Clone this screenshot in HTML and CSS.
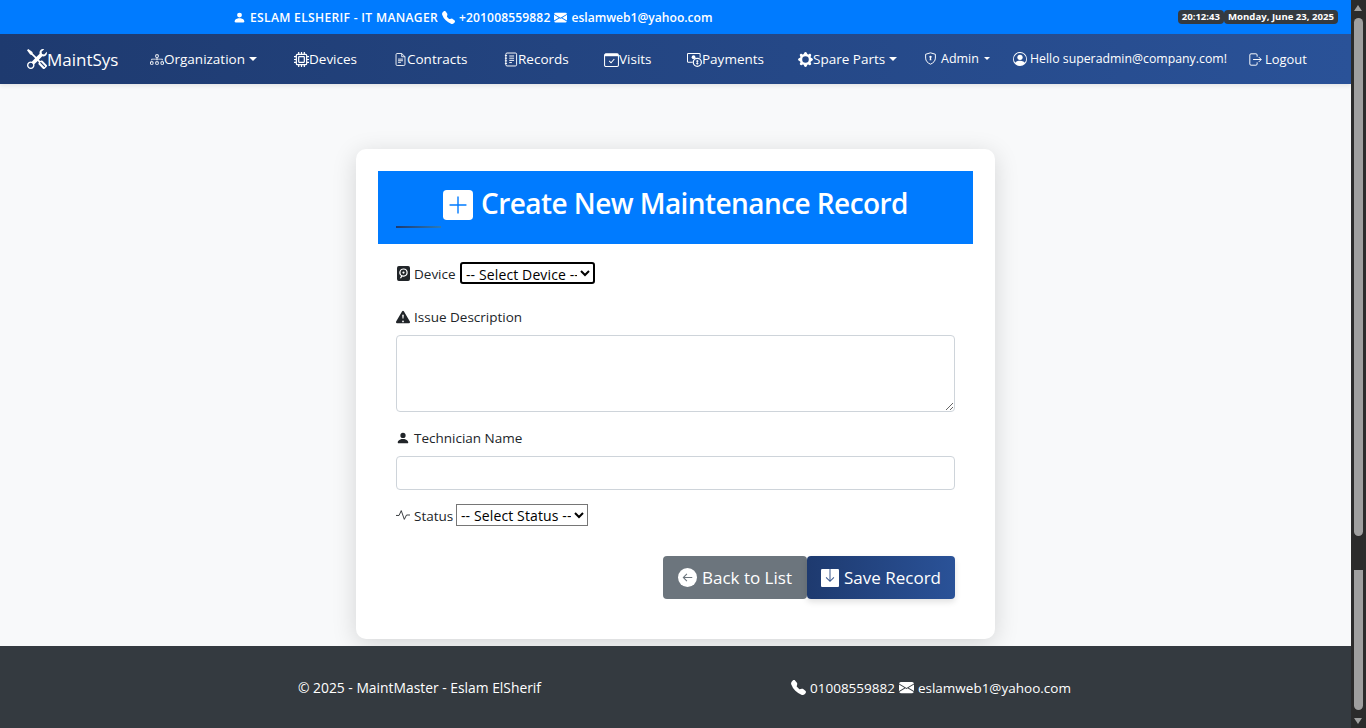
FILE: index.html
```html
<!DOCTYPE html>
<html lang="en">
<head>
<meta charset="utf-8">
<title>Create New Maintenance Record</title>
<link rel="stylesheet" href="styles.css">
</head>
<body>
<div class="app">
  <div class="page">
    <div class="topbar">
      <div class="contact">
        <svg class="ti" viewBox="0 0 16 16"><path fill="currentColor" d="M3 14s-1 0-1-1 1-4 6-4 6 3 6 4-1 1-1 1H3zm5-6a3 3 0 1 0 0-6 3 3 0 0 0 0 6z"/></svg>
        <span class="c-name">ESLAM ELSHERIF - IT MANAGER</span>
        <svg class="ti" viewBox="0 0 16 16"><path fill="currentColor" d="M1.900.5a1.700 1.700 0 0 1 2.600.2l1.800 2.300c.3.400.4 1 .3 1.500l-.5 2.200c0 .2 0 .5.200.6l2.400 2.400c.2.200.4.200.6.200l2.200-.5c.5-.1 1.100 0 1.500.3l2.300 1.800c.8.600.9 1.900.2 2.600l-1 1c-.8.800-1.900 1.100-2.900.8a18.600 18.600 0 0 1-7-4.400 18.600 18.600 0 0 1-4.400-7c-.3-1-.1-2.100.7-2.900l1-1.100z"/></svg>
        <span class="c-phone">+201008559882</span>
        <svg class="ti" viewBox="0 0 16 16"><path fill="currentColor" d="M.05 3.600A2 2 0 0 1 2 2h12a2 2 0 0 1 1.950 1.600L8 8.400.05 3.600zM0 4.700v7.100l5.800-3.600L0 4.700zm6.800 4.100L.2 12.900A2 2 0 0 0 2 14h12a2 2 0 0 0 1.800-1.100l-6.600-4.100-1.200.7-1.200-.7zm3.400-.6 5.800 3.600V4.700l-5.800 3.500z"/></svg>
        <span>eslamweb1@yahoo.com</span>
      </div>
      <div class="clock">
        <span class="chip">20:12:43</span><span class="chip">Monday, June 23, 2025</span>
      </div>
    </div>

    <nav class="navbar">
      <a class="brand">
        <svg class="brand-icon" viewBox="0 0 16 16"><path fill="currentColor" d="M1 0 0 1l2.200 3.081a1 1 0 0 0 .815.419h.07a1 1 0 0 1 .708.293l2.675 2.675-2.617 2.654A3.003 3.003 0 0 0 0 13a3 3 0 1 0 5.878-.851l2.654-2.617.968.968-.305.914a1 1 0 0 0 .242 1.023l3.270 3.270a.997.997 0 0 0 1.414 0l1.586-1.586a.997.997 0 0 0 0-1.414l-3.270-3.270a1 1 0 0 0-1.023-.242L10.500 9.500l-.96-.96 2.680-2.643A3.005 3.005 0 0 0 16 3q0-.405-.102-.777l-2.140 2.141L12 4l-.364-1.757L13.777.102a3 3 0 0 0-3.675 3.680L7.462 6.460 4.793 3.793a1 1 0 0 1-.293-.707v-.071a1 1 0 0 0-.419-.814zm9.646 10.646a.5.500 0 0 1 .708 0l2.914 2.915a.456.456 0 0 1-.645.644l-2.914-2.914a.5.500 0 0 1 0-.707zM3 11l.471.242.529.026.287.445.445.287.026.529L5 13l-.242.471-.026.529-.445.287-.287.445-.529.026L3 15l-.471-.242L2 14.732l-.287-.445L1.268 14l-.026-.529L1 13l.242-.471.026-.529.445-.287.287-.445.529-.026z"/></svg>
        <span>MaintSys</span>
      </a>
      <a class="item w-org"><svg class="ni" viewBox="0 0 16 16"><path fill="currentColor" fill-rule="evenodd" d="M6 3.500A1.500 1.500 0 0 1 7.500 2h1A1.500 1.500 0 0 1 10 3.500v1A1.500 1.500 0 0 1 8.500 6v1H14a.5.500 0 0 1 .5.500v1a.5.500 0 0 1-1 0V8h-5v.5a.5.500 0 0 1-1 0V8h-5v.5a.5.500 0 0 1-1 0v-1A.5.500 0 0 1 2 7h5.500V6A1.500 1.500 0 0 1 6 4.500zM8.500 5a.5.500 0 0 0 .5-.5v-1a.5.500 0 0 0-.5-.5h-1a.5.500 0 0 0-.5.500v1a.5.500 0 0 0 .5.500zM0 11.500A1.500 1.500 0 0 1 1.500 10h1A1.500 1.500 0 0 1 4 11.500v1A1.500 1.500 0 0 1 2.500 14h-1A1.500 1.500 0 0 1 0 12.500zm1.500-.5a.5.500 0 0 0-.5.500v1a.5.500 0 0 0 .5.500h1a.5.500 0 0 0 .5-.5v-1a.5.500 0 0 0-.5-.5zm4.500.500A1.500 1.500 0 0 1 7.500 10h1a1.500 1.500 0 0 1 1.500 1.500v1A1.500 1.500 0 0 1 8.500 14h-1A1.500 1.500 0 0 1 6 12.500zm1.500-.5a.5.500 0 0 0-.5.500v1a.5.500 0 0 0 .5.500h1a.5.500 0 0 0 .5-.5v-1a.5.500 0 0 0-.5-.5zm4.500.500a1.500 1.500 0 0 1 1.500-1.500h1a1.500 1.500 0 0 1 1.500 1.500v1a1.500 1.500 0 0 1-1.500 1.500h-1a1.500 1.500 0 0 1-1.500-1.500zm1.500-.5a.5.500 0 0 0-.5.500v1a.5.500 0 0 0 .5.500h1a.5.500 0 0 0 .5-.5v-1a.5.500 0 0 0-.5-.5z"/></svg><span>Organization</span><i class="caret"></i></a>
      <a class="item w-dev"><svg class="ni" viewBox="0 0 16 16"><path fill="none" stroke="currentColor" stroke-width="1.300" d="M3.500 2.500h9a1 1 0 0 1 1 1v9a1 1 0 0 1-1 1h-9a1 1 0 0 1-1-1v-9a1 1 0 0 1 1-1zM5.500 5h5a.5.500 0 0 1 .5.500v5a.5.500 0 0 1-.5.500h-5a.5.500 0 0 1-.5-.500v-5a.5.500 0 0 1 .5-.500zM5 0v2.500M8 0v2.500M11 0v2.500M5 13.500V16M8 13.500V16M11 13.500V16M0 5h2.500M0 8h2.500M0 11h2.500M13.500 5H16M13.500 8H16M13.500 11H16"/></svg><span>Devices</span></a>
      <a class="item w-con"><svg class="ni" viewBox="0 0 16 16"><path fill="none" stroke="currentColor" stroke-width="1.100" d="M3.500.6h6l4 4v9.400a1.400 1.400 0 0 1-1.400 1.400H3.900a1.400 1.400 0 0 1-1.400-1.400V2a1.400 1.400 0 0 1 1-1.400zM9.500.6v4h4M5 7.500h6M5 9.500h6M5 11.500h3.500"/></svg><span>Contracts</span></a>
      <a class="item w-rec"><svg class="ni" viewBox="0 0 16 16"><path fill="none" stroke="currentColor" stroke-width="1.100" d="M3.500.6h9.500a1.400 1.400 0 0 1 1.400 1.400v12a1.400 1.400 0 0 1-1.400 1.400H3.500a1.400 1.400 0 0 1-1.400-1.400V2A1.400 1.400 0 0 1 3.500.6zM1 3.500h2.500M1 6.500h2.500M1 9.500h2.500M1 12.500h2.500M6 4h5.500M6 6.500h5.500M6 9h5.500M6 11.500h3"/></svg><span>Records</span></a>
      <a class="item w-vis"><svg class="ni" viewBox="0 0 16 16"><path fill="none" stroke="currentColor" stroke-width="1.100" d="M2 2h12a1.400 1.400 0 0 1 1.400 1.400V14a1.400 1.400 0 0 1-1.400 1.400H2A1.400 1.400 0 0 1 .6 14V3.400A1.400 1.400 0 0 1 2 2zM5.500 9.500l2 2 3.500-4"/><path fill="currentColor" d="M1 2h14v2.500H1z"/></svg><span>Visits</span></a>
      <a class="item w-pay"><svg class="ni" viewBox="0 0 16 16"><path fill="none" stroke="currentColor" stroke-width="1.100" d="M6 11H1.500a1 1 0 0 1-1-1V2.500a1 1 0 0 1 1-1H13a1 1 0 0 1 1 1V6"/><circle cx="7" cy="5.500" r="2" fill="currentColor"/><circle cx="11" cy="11" r="4.300" fill="none" stroke="currentColor" stroke-width="1.300"/><path fill="none" stroke="currentColor" d="M11 8.500v5M9.800 9.800h2.400M9.800 12.200h2.400"/></svg><span>Payments</span></a>
      <a class="item w-spa"><svg class="ni" viewBox="0 0 16 16"><path fill="currentColor" fill-rule="evenodd" d="M9.400 1.100c-.4-1.400-2.400-1.400-2.800 0l-.1.300a1.500 1.500 0 0 1-2.100.9l-.3-.2c-1.300-.7-2.700.7-2 2l.2.300a1.500 1.500 0 0 1-.9 2.100l-.3.100c-1.400.4-1.400 2.400 0 2.800l.3.100a1.500 1.500 0 0 1 .9 2.100l-.2.300c-.7 1.300.7 2.700 2 2l.3-.2a1.500 1.500 0 0 1 2.100.9l.1.300c.4 1.400 2.400 1.400 2.800 0l.1-.3a1.500 1.500 0 0 1 2.100-.9l.3.200c1.300.7 2.700-.7 2-2l-.2-.3a1.500 1.500 0 0 1 .9-2.100l.3-.1c1.400-.4 1.400-2.400 0-2.800l-.3-.1a1.500 1.500 0 0 1-.9-2.100l.2-.3c.7-1.300-.7-2.700-2-2l-.3.2a1.500 1.500 0 0 1-2.100-.9l-.1-.3zM8 11.500a3.500 3.500 0 1 1 0-7 3.500 3.500 0 0 1 0 7z"/></svg><span>Spare Parts</span><i class="caret"></i></a>
      <a class="item w-adm"><svg class="ni" viewBox="0 0 16 16"><path fill="none" stroke="currentColor" stroke-width="1.200" d="M8 1 2 2.800v4.700c0 3.500 2.500 6 6 7.500 3.500-1.500 6-4 6-7.500V2.800L8 1z"/><path fill="currentColor" d="M8 4.500a1.500 1.500 0 0 1 .7 2.800l.4 2.700H6.900l.4-2.700A1.500 1.500 0 0 1 8 4.500z"/></svg><span>Admin</span><i class="caret small"></i></a>
      <a class="item w-hel"><svg class="ni" viewBox="0 0 16 16"><path fill="currentColor" d="M11 6a3 3 0 1 1-6 0 3 3 0 0 1 6 0z"/><path fill="currentColor" fill-rule="evenodd" d="M0 8a8 8 0 1 1 16 0A8 8 0 0 1 0 8zm8-7a7 7 0 0 0-5.500 11.300C3.200 11.200 4.800 10 8 10s4.800 1.200 5.500 2.300A7 7 0 0 0 8 1z"/></svg><span>Hello superadmin@company.com!</span></a>
      <a class="item w-log"><svg class="ni" viewBox="0 0 16 16"><path fill="none" stroke="currentColor" stroke-width="1.200" d="M10 11.500v2a1.500 1.500 0 0 1-1.500 1.500h-6A1.500 1.500 0 0 1 1 13.500v-11A1.500 1.500 0 0 1 2.500 1h6A1.500 1.500 0 0 1 10 2.500v2M5 8h10M12 5l3 3-3 3"/></svg><span>Logout</span></a>
    </nav>

    <main class="main">
      <section class="card">
        <header class="card-head">
          <h2 class="title">
            <svg class="plus" viewBox="0 0 16 16"><path fill="#fff" d="M2 0a2 2 0 0 0-2 2v12a2 2 0 0 0 2 2h12a2 2 0 0 0 2-2V2a2 2 0 0 0-2-2H2z"/><path fill="none" stroke="#007bff" stroke-width=".75" d="M8 3.500v9M3.500 8h9"/></svg>
            <span class="title-text">Create New Maintenance Record</span>
          </h2>
          <i class="underline"></i>
        </header>
        <form class="form">
          <div class="row-inline row-device">
            <svg class="fi fi-hdd" viewBox="0 0 14 16"><path fill="#212529" fill-rule="evenodd" d="M2 0h10a2 2 0 0 1 2 2v12a2 2 0 0 1-2 2H2a2 2 0 0 1-2-2V2a2 2 0 0 1 2-2zm5 2.500a4.500 4.500 0 0 0-2.600 8.200L3 13h1.500l1.200-1.700A4.500 4.500 0 1 0 7 2.500zm0 1.300a3.200 3.200 0 1 1 0 6.400 3.200 3.200 0 0 1 0-6.400zm0 2a1.200 1.200 0 1 0 0 2.400 1.200 1.200 0 0 0 0-2.400z"/></svg>
            <label class="lbl">Device</label>
            <select class="sel sel-focus"><option>-- Select Device --</option></select>
          </div>
          <div class="field field-issue">
            <label class="lbl-row">
              <svg class="fi" viewBox="0 0 16 16"><path fill="#212529" d="M8.980 1.560a1.130 1.130 0 0 0-1.960 0L.15 13.230C-.3 14 .25 15 1.130 15h13.740c.88 0 1.430-1 .98-1.770L8.980 1.560zM8 5c.53 0 .95.460.9 1l-.35 3.500a.55.550 0 0 1-1.100 0L7.100 6c-.05-.54.37-1 .9-1zm0 7a1 1 0 1 1 0 2 1 1 0 0 1 0-2z"/></svg>
              <span>Issue Description</span>
            </label>
            <textarea class="control area"></textarea>
          </div>
          <div class="field field-tech">
            <label class="lbl-row">
              <svg class="fi" viewBox="0 0 16 16"><path fill="#212529" d="M3 14s-1 0-1-1 1-4 6-4 6 3 6 4-1 1-1 1H3zm5-6a3 3 0 1 0 0-6 3 3 0 0 0 0 6z"/></svg>
              <span>Technician Name</span>
            </label>
            <input class="control text" type="text">
          </div>
          <div class="row-inline row-status">
            <svg class="fi" viewBox="0 0 16 16"><path fill="none" stroke="#212529" d="M0 8.500h3.500L6 3l3.500 10L12 8h4"/></svg>
            <label class="lbl">Status</label>
            <select class="sel sel-status"><option>-- Select Status --</option></select>
          </div>
          <div class="actions">
            <a class="btn btn-back">
              <svg class="bi bi-back" viewBox="0 0 16 16"><circle cx="8" cy="8" r="8" fill="#fff"/><path fill="none" stroke="#6c757d" stroke-width=".9" d="M12 8H4.500M7.500 5l-3 3 3 3"/></svg>
              <span>Back to List</span>
            </a>
            <a class="btn btn-save">
              <svg class="bi" viewBox="0 0 16 16"><path fill="#fff" d="M1 0h14a1 1 0 0 1 1 1v14a1 1 0 0 1-1 1H1a1 1 0 0 1-1-1V1a1 1 0 0 1 1-1z"/><path fill="none" stroke="#3d5a8f" stroke-width=".9" d="M8 0v10.500M4.500 7.500 8 11l3.500-3.500"/></svg>
              <span>Save Record</span>
            </a>
          </div>
        </form>
      </section>
    </main>

    <footer class="footer">
      <div class="foot-col foot-left"><span>© 2025 - MaintMaster - Eslam ElSherif</span></div>
      <div class="foot-col foot-right">
        <svg class="ti ti-foot" viewBox="0 0 16 16"><path fill="currentColor" d="M1.900.5a1.700 1.700 0 0 1 2.600.2l1.800 2.300c.3.400.4 1 .3 1.500l-.5 2.200c0 .2 0 .5.200.6l2.400 2.400c.2.200.4.200.6.200l2.200-.5c.5-.1 1.100 0 1.500.3l2.300 1.800c.8.600.9 1.900.2 2.600l-1 1c-.8.800-1.900 1.100-2.900.8a18.600 18.600 0 0 1-7-4.400 18.600 18.600 0 0 1-4.400-7c-.3-1-.1-2.100.7-2.900l1-1.100z"/></svg>
        <span>01008559882</span>
        <svg class="ti ti-foot" viewBox="0 0 16 16"><path fill="currentColor" d="M.05 3.600A2 2 0 0 1 2 2h12a2 2 0 0 1 1.950 1.600L8 8.400.05 3.600zM0 4.700v7.100l5.800-3.600L0 4.700zm6.800 4.100L.2 12.900A2 2 0 0 0 2 14h12a2 2 0 0 0 1.800-1.100l-6.600-4.100-1.200.7-1.200-.7zm3.400-.6 5.800 3.600V4.700l-5.800 3.500z"/></svg>
        <span>eslamweb1@yahoo.com</span>
      </div>
    </footer>
  </div>

  <aside class="scrollbar">
    <i class="arrow up"></i>
    <i class="thumb t1"></i>
    <i class="thumb t2"></i>
    <i class="arrow down"></i>
  </aside>
</div>
</body>
</html>
```
FILE: styles.css
```css
* { box-sizing: border-box; }
html, body { margin: 0; height: 728px; overflow: hidden; }
body { font-family: "Open Sans", "Noto Sans", sans-serif; font-size: 13.5px; color: #212529; background: #f8f9fa; }
.app { display: flex; width: 1366px; height: 728px; }
.page { width: 1351px; display: flex; flex-direction: column; }

.topbar { height: 34px; flex: none; background: #007bff; color: #fff; display: flex; align-items: center; justify-content: space-between; padding: 0 13px 0 233px; }
.contact { display: flex; align-items: center; gap: 4px; font-size: 12.1px; font-weight: 600; }
.c-name { letter-spacing: .31px; }
.c-phone { letter-spacing: .12px; }
.ti { width: 13px; height: 13px; flex: none; }
.clock { display: flex; font-size: 9.6px; font-weight: 700; }
.chip { background: #343a40; border-radius: 4px; padding: 1px 4px; line-height: 12px; }

.navbar { height: 50px; flex: none; background: linear-gradient(90deg, #1e3a6f, #2a5298); color: #fff; display: flex; align-items: center; box-shadow: 0 2px 4px rgba(0,0,0,.08); padding-left: 27px; position: relative; }
.brand { display: flex; align-items: center; font-size: 17px; width: 123px; }
.brand-icon { width: 20px; height: 20px; }
.item { display: flex; align-items: center; font-size: 13.5px; }
.ni { width: 15px; height: 15px; flex: none; }
.caret { width: 0; height: 0; border: 4px solid transparent; border-top-color: #fff; border-bottom: 0; margin-left: 4px; }
.caret.small { border-width: 3.5px; border-bottom: 0; margin-left: 5px; }
.w-org { width: 144px; }
.w-org .ni { width: 14px; }
.w-dev { width: 100px; }
.w-con { width: 110px; }
.w-con .ni { width: 13px; }
.w-rec { width: 100px; }
.w-rec .ni { width: 14px; }
.w-vis { width: 83px; }
.w-pay { width: 111px; }
.w-spa { width: 126px; }
.w-adm { width: 89px; font-size: 12.5px; padding-bottom: 1px; }
.w-adm .ni { width: 13px; margin-right: 4px; }
.w-hel { width: 236px; font-size: 12.3px; padding-bottom: 1px; }
.w-hel .ni { width: 14px; height: 14px; margin-right: 3px; }
.w-log { width: 70px; font-size: 12.9px; }
.w-log .ni { width: 13px; height: 13px; margin-right: 3px; }

.main { flex: 1; min-height: 0; display: flex; justify-content: center; align-items: flex-start; padding-top: 65px; }
.card { width: 639px; height: 490px; background: #fff; border-radius: 10px; padding: 22px; box-shadow: 0 5px 25px rgba(0,0,0,.15); flex: none; }
.card-head { background: #007bff; color: #fff; height: 73px; position: relative; display: flex; align-items: center; justify-content: center; padding-bottom: 6px; }
.title { margin: 0; font-size: 28px; letter-spacing: -.57px; font-weight: 600; line-height: 1.2; display: flex; align-items: center; gap: 8px; }
.title-text { padding-bottom: 2px; }
.plus { width: 30px; height: 30px; }
.underline { position: absolute; left: 18px; bottom: 16px; width: 45px; height: 2px; background: linear-gradient(90deg, #1e3a6f, #2a7ab8); }
.form { padding: 0 18px; }
.row-inline { display: flex; align-items: center; }
.row-device { margin-top: 17px; height: 24px; }
.fi { width: 14px; height: 14px; flex: none; margin-right: 4px; }
.fi-hdd { height: 15px; width: 13px; margin: 0 4px 0 1px; }
.lbl { flex: none; padding-top: 2px; }
.row-device .lbl { width: 46px; }
.row-status .lbl { width: 42px; }
.sel { font: 14px "Open Sans", "Noto Sans", sans-serif; letter-spacing: .12px; color: #000; background: #fff; border: 1px solid #767676; border-radius: 0; height: 22px; padding: 0; flex: none; }
.sel-focus { border: 2px solid #000; border-radius: 3px; width: 135px; }
.sel-status { width: 132px; }
.field-issue { margin-top: 22px; }
.lbl-row { display: flex; align-items: center; height: 21px; margin-bottom: 7px; padding-bottom: 2px; }
.control { display: block; width: 100%; border: 1px solid #ced4da; border-radius: 4px; background: #fff; }
.area { height: 77px; }
.text { height: 34px; }
.field-tech { margin-top: 16px; }
.row-status { margin-top: 14px; height: 22px; }
.actions { display: flex; justify-content: flex-end; margin-top: 30px; }
.btn { height: 43px; display: flex; align-items: center; gap: 5px; color: #fff; font-size: 17px; border-radius: 4px; padding: 0 14px; }
.btn-back { background: #6c757d; padding: 0 15px; width: 144px; }
.btn-save { background: linear-gradient(90deg, #1e3a6f, #2a5298); box-shadow: 0 3px 6px rgba(0,0,0,.12); width: 148px; }
.bi { width: 18px; height: 18px; flex: none; }
.bi-back { width: 19px; height: 19px; }

.footer { height: 82px; flex: none; background: #343a40; color: #fff; display: flex; align-items: center; font-size: 13.5px; padding: 1px 0 0 298px; }
.foot-col { display: flex; align-items: center; gap: 4px; }
.foot-left { font-size: 13.85px; width: 243px; white-space: nowrap; }
.foot-right { margin-left: 250px; }
.ti-foot { width: 15px; height: 15px; }

.scrollbar { width: 15px; background: #2b2b2b; position: relative; flex: none; }
.thumb { position: absolute; left: 3px; width: 9px; background: #9f9f9f; }
.t1 { top: 18px; height: 518px; border-radius: 5px; }
.t2 { top: 570px; height: 140px; border-radius: 0 0 5px 5px; }
.arrow { position: absolute; left: 3px; width: 0; height: 0; border-style: solid; border-color: transparent; border-left-width: 4.5px; border-right-width: 4.5px; }
.arrow.up { top: 5px; border-bottom-color: #9f9f9f; border-bottom-width: 6px; border-top-width: 0; }
.arrow.down { bottom: 4px; border-top-color: #9f9f9f; border-top-width: 6px; border-bottom-width: 0; }
```
